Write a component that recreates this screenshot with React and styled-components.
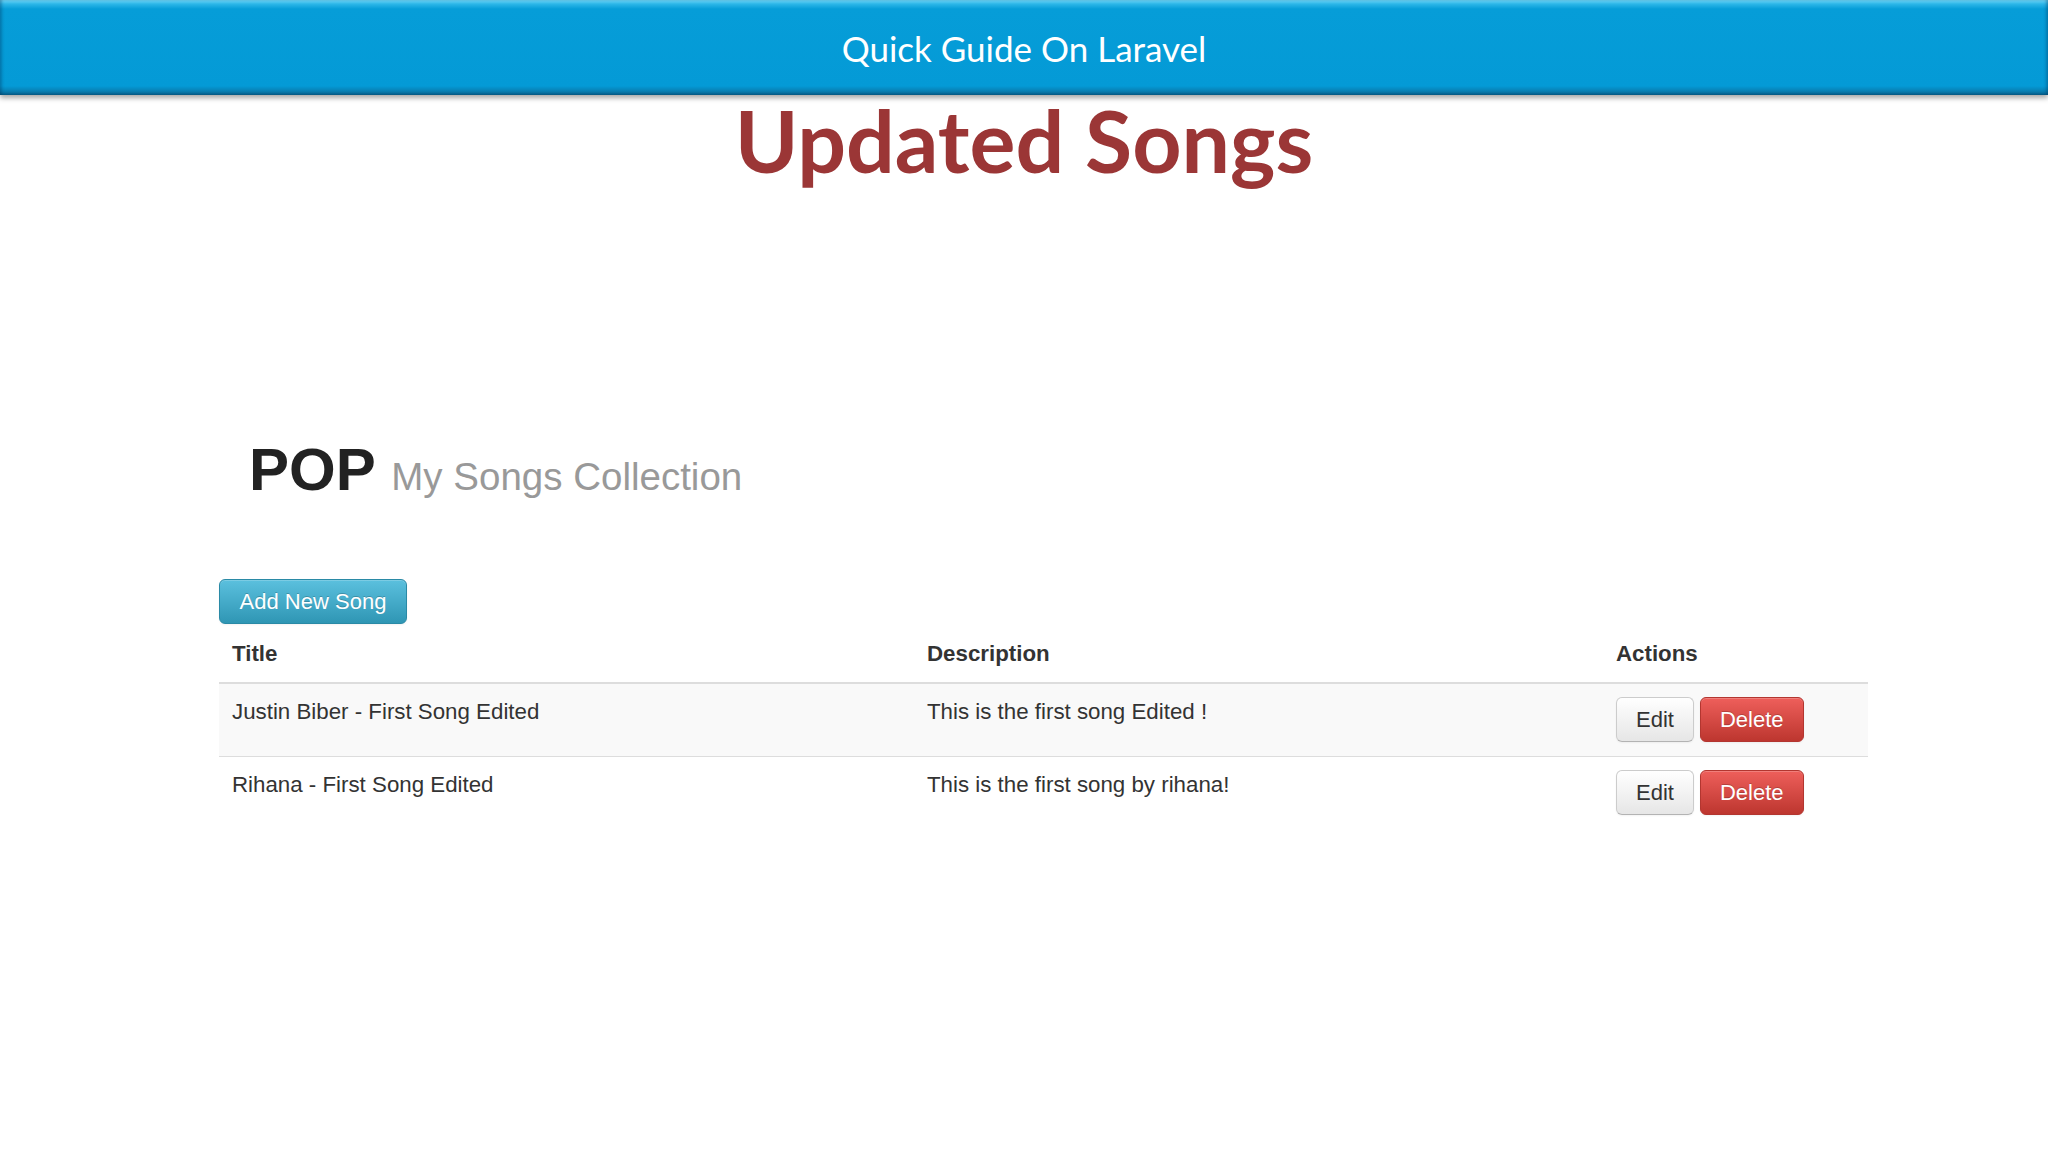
import React from "react";
import styled, { createGlobalStyle } from "styled-components";

const GlobalStyle = createGlobalStyle`
  html, body {
    margin: 0;
    padding: 0;
    background: #ffffff;
  }
  body {
    width: 2048px;
    height: 1152px;
    overflow: hidden;
    font-family: "Liberation Sans", Arial, sans-serif;
    color: #333333;
  }
`;

const songs = [
  { title: "Justin Biber - First Song Edited", description: "This is the first song Edited !" },
  { title: "Rihana - First Song Edited", description: "This is the first song by rihana!" },
];

const Page = styled.div`
  display: flex;
  flex-direction: column;
  width: 2048px;
  height: 1152px;
`;

const Banner = styled.header`
  height: 95px;
  display: flex;
  align-items: center;
  justify-content: center;
  background: linear-gradient(
    to bottom,
    #6fd6f7 0px,
    #2cb6e8 4px,
    #069dd8 9px,
    #049ad6 86px,
    #0880b4 91px,
    #075e88 95px
  );
  box-shadow:
    0 3px 5px rgba(0, 0, 0, 0.35),
    inset 3px 0 3px -1px rgba(0, 50, 90, 0.35),
    inset -3px 0 3px -1px rgba(0, 50, 90, 0.35);
  color: #ffffff;
  font-family: Lato, "Open Sans", sans-serif;
  font-size: 35px;
  position: relative;
  z-index: 1;
`;

const SlideTitle = styled.h1`
  margin: 2px 0 0;
  text-align: center;
  font-family: Lato, "Open Sans", sans-serif;
  font-weight: 700;
  font-size: 86px;
  line-height: 1;
  color: #9b3636;
`;

const Content = styled.main`
  display: flex;
  flex-direction: column;
  align-items: flex-start;
  padding: 257px 0 0 219px;
  width: 1649px;
`;

const Heading = styled.h2`
  margin: 0 0 0 30px;
  font-size: 60px;
  font-weight: 700;
  line-height: 1;
  color: #222222;

  small {
    font-size: 38.5px;
    font-weight: 400;
    color: #999999;
  }
`;

const Button = styled.button`
  display: inline-flex;
  align-items: center;
  justify-content: center;
  height: 45px;
  padding: 0 19px;
  border-radius: 6px;
  font-family: "Liberation Sans", Arial, sans-serif;
  font-size: 22px;
  cursor: pointer;
  ${({ $variant }) =>
    $variant === "info"
      ? `
    color: #fff;
    background: linear-gradient(to bottom, #5bc0de, #2f96b4);
    border: 1px solid #2a8aa6;
    text-shadow: 0 -1px 0 rgba(0,0,0,.2);
  `
      : $variant === "danger"
      ? `
    color: #fff;
    background: linear-gradient(to bottom, #ee5f5b, #bd362f);
    border: 1px solid #b33630;
    text-shadow: 0 -1px 0 rgba(0,0,0,.2);
  `
      : `
    color: #333;
    background: linear-gradient(to bottom, #ffffff, #e6e6e6);
    border: 1px solid #cccccc;
    border-bottom-color: #b3b3b3;
  `}
  box-shadow: inset 0 1px 0 rgba(255, 255, 255, 0.2), 0 1px 2px rgba(0, 0, 0, 0.05);
`;

const AddButton = styled(Button)`
  margin-top: 79px;
  width: 188px;
`;

const Table = styled.table`
  width: 1649px;
  border-collapse: collapse;
  table-layout: fixed;
  font-size: 22.3px;
  line-height: 32px;
  color: #333333;

  th {
    text-align: left;
    font-weight: 700;
    padding: 14px 13px 12px;
    border-bottom: 2px solid #dddddd;
  }
  td {
    vertical-align: top;
    padding: 12px 13px 14px;
    border-top: 1px solid #dddddd;
  }
  tbody tr:nth-child(odd) td {
    background: #f9f9f9;
  }
`;

const Actions = styled.div`
  display: flex;
  gap: 6px;
  padding-top: 1px;
`;

export default function App() {
  return (
    <Page>
      <GlobalStyle />
      <Banner>Quick Guide On Laravel</Banner>
      <SlideTitle>Updated Songs</SlideTitle>
      <Content>
        <Heading>
          POP <small>My Songs Collection</small>
        </Heading>
        <AddButton $variant="info">Add New Song</AddButton>
        <Table>
          <colgroup>
            <col style={{ width: 695 }} />
            <col style={{ width: 689 }} />
            <col />
          </colgroup>
          <thead>
            <tr>
              <th>Title</th>
              <th>Description</th>
              <th>Actions</th>
            </tr>
          </thead>
          <tbody>
            {songs.map(song => (
              <tr key={song.title}>
                <td>{song.title}</td>
                <td>{song.description}</td>
                <td>
                  <Actions>
                    <Button>Edit</Button>
                    <Button $variant="danger">Delete</Button>
                  </Actions>
                </td>
              </tr>
            ))}
          </tbody>
        </Table>
      </Content>
    </Page>
  );
}
